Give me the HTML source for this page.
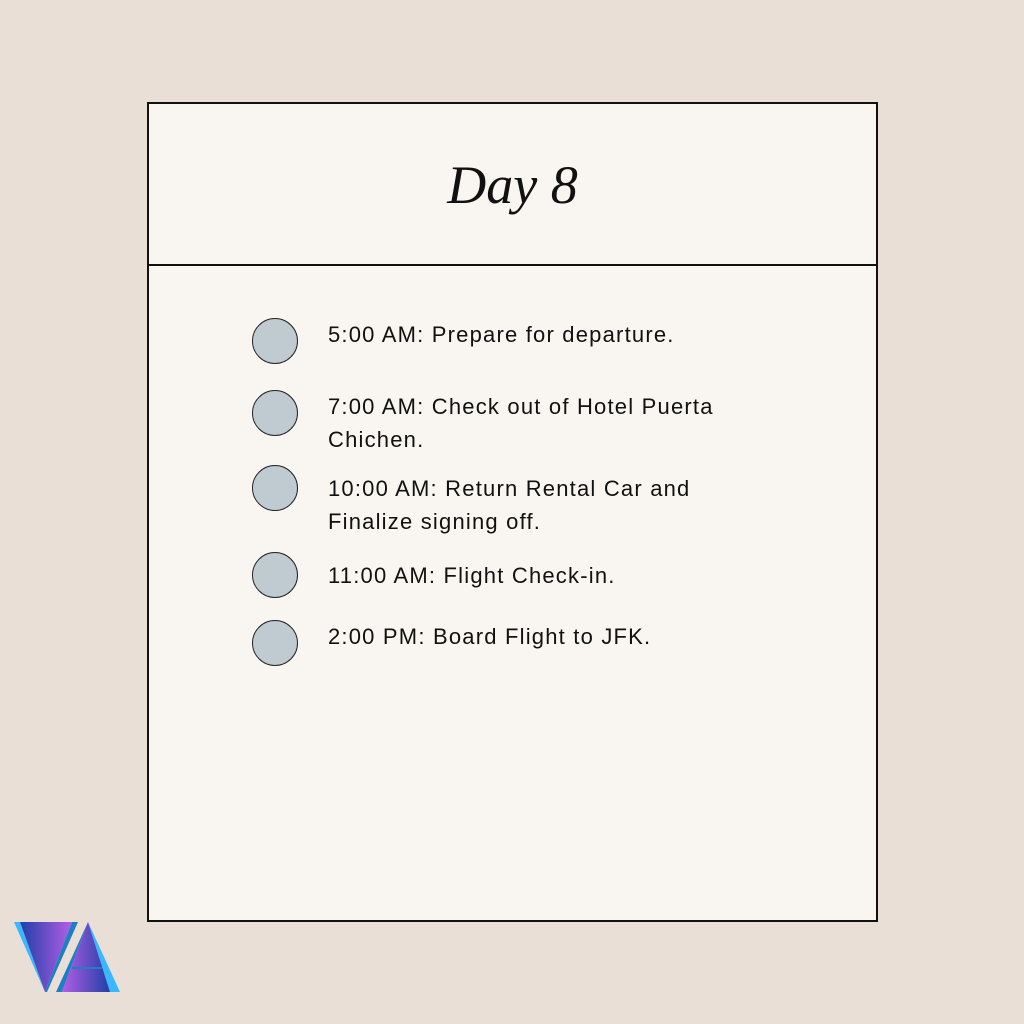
<!DOCTYPE html>
<html><head><style>
body{margin:0;width:1024px;height:1024px;background:#eadfd6;position:relative;overflow:hidden;font-family:"Liberation Sans",sans-serif}
.card{position:absolute;left:147px;top:102px;width:727px;height:816px;border:2px solid #111;background:#f9f5f0}
.hd{position:absolute;left:0;top:0;width:727px;height:160px;border-bottom:2px solid #111}
.t{position:absolute;left:149px;width:727px;top:152px;text-align:center;font-family:"Liberation Serif",serif;font-style:italic;font-size:54px;color:#111;line-height:66px}
.c{position:absolute;left:252px;width:44px;height:44px;border-radius:50%;background:#bfcbd0;border:1.5px solid #222}
.x{position:absolute;left:328px;font-size:22px;letter-spacing:1.2px;line-height:33px;color:#111;width:405px}
</style></head><body>
<div class="card"><div class="hd"></div></div>
<div class="t">Day 8</div>
<div class="c" style="top:318px"></div><div class="x" style="top:318px">5:00 AM: Prepare for departure.</div>
<div class="c" style="top:390px"></div><div class="x" style="top:390px">7:00 AM: Check out of Hotel Puerta Chichen.</div>
<div class="c" style="top:465px"></div><div class="x" style="top:472px">10:00 AM: Return Rental Car and Finalize signing off.</div>
<div class="c" style="top:552px"></div><div class="x" style="top:559px">11:00 AM: Flight Check-in.</div>
<div class="c" style="top:620px"></div><div class="x" style="top:620px">2:00 PM: Board Flight to JFK.</div>
<svg style="position:absolute;left:0;top:900px" width="140" height="110" viewBox="0 0 140 110">
<defs>
<linearGradient id="g1" x1="0" x2="1"><stop offset="0" stop-color="#1e3fa8"/><stop offset="1" stop-color="#b55ee6"/></linearGradient>
<linearGradient id="g2" x1="0" x2="1"><stop offset="0" stop-color="#b55ee6"/><stop offset="1" stop-color="#1e3fa8"/></linearGradient>
</defs>
<polygon points="14,22 20,22 45,92" fill="#3ab8ff"/>
<polygon points="20,22 72,22 45,92" fill="url(#g1)"/>
<polygon points="72,22 78,22 47,92 45,92" fill="#1e7fc4"/>
<polygon points="88,22 56,92 62,92" fill="#1e7fc4"/>
<polygon points="88,22 120,92 110,92" fill="#3ab8ff"/>
<polygon points="88,22 110,92 62,92" fill="url(#g2)"/>
<rect x="72" y="67" width="30" height="2" fill="#1e7fc4"/>
</svg>
</body></html>
